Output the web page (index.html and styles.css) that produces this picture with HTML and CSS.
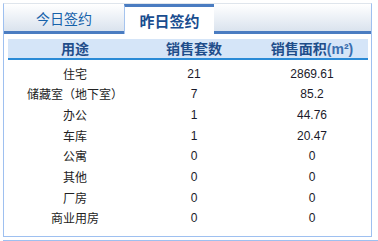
FILE: index.html
```html
<!DOCTYPE html>
<html lang="zh">
<head>
<meta charset="utf-8">
<link rel="stylesheet" href="styles.css">
</head>
<body>
<div class="panel">
  <div class="tabs">
    <div class="tab">今日签约</div>
    <div class="tab active">昨日签约</div>
    <div class="tab-rest"></div>
  </div>
  <div class="content">
    <div class="grid head">
      <div class="c1">用途</div>
      <div class="c2">销售套数</div>
      <div class="c3">销售面积<span class="unit">(m²)</span></div>
    </div>
    <div class="rows">
      <div class="grid row"><div class="c1">住宅</div><div class="c2 num">21</div><div class="c3 num">2869.61</div></div>
      <div class="grid row"><div class="c1">储藏室（地下室）</div><div class="c2 num">7</div><div class="c3 num">85.2</div></div>
      <div class="grid row"><div class="c1">办公</div><div class="c2 num">1</div><div class="c3 num">44.76</div></div>
      <div class="grid row"><div class="c1">车库</div><div class="c2 num">1</div><div class="c3 num">20.47</div></div>
      <div class="grid row"><div class="c1">公寓</div><div class="c2 num">0</div><div class="c3 num">0</div></div>
      <div class="grid row"><div class="c1">其他</div><div class="c2 num">0</div><div class="c3 num">0</div></div>
      <div class="grid row"><div class="c1">厂房</div><div class="c2 num">0</div><div class="c3 num">0</div></div>
      <div class="grid row"><div class="c1">商业用房</div><div class="c2 num">0</div><div class="c3 num">0</div></div>
    </div>
  </div>
</div>
<div class="next"></div>
</body>
</html>
```

FILE: styles.css
```css
html, body {
  margin: 0;
  padding: 0;
  background: #ffffff;
}
body {
  font-family: "Noto Sans CJK SC", "Liberation Sans", sans-serif;
  font-size: 12px;
  color: #222222;
}
.panel {
  box-sizing: border-box;
  margin: 3px 0 0 3px;
  width: 369px;
  height: 234px;
  border: 1px solid #9ec0f0;
  border-top: 1px solid #dfe5ec;
  display: flex;
  flex-direction: column;
}
.tabs {
  display: flex;
  height: 30px;
}
.tab, .tab-rest {
  box-sizing: border-box;
  height: 30px;
  background: linear-gradient(#ffffff, #dae3ee);
  border-bottom: 3px solid #4a7cc1;
}
.tab {
  width: 120px;
  display: flex;
  align-items: center;
  justify-content: center;
  font-size: 14px;
  color: #1662aa;
  line-height: 1;
}
.tab.active {
  width: 90px;
  background: #ffffff;
  border-bottom: none;
  border-top: 3px solid #4a7cc1;
  border-left: 1px solid #a6c4ee;
  font-weight: bold;
  font-size: 15px;
  color: #1a4d8f;
}
.tab-rest {
  flex: 1;
}
.content {
  padding: 5px 3px 0 4px;
}
.grid {
  display: grid;
  grid-template-columns: 134px 104px 1fr;
  text-align: center;
}
.c3 {
  padding-left: 10px;
}
.head {
  height: 19px;
  background: #d5e5f8;
  border-bottom: 2px solid #2a8ad6;
  font-weight: bold;
  font-size: 14px;
  color: #1f4d8a;
  line-height: 19px;
}
.unit {
  font-family: "Liberation Sans", sans-serif;
  color: #3a6eae;
}
.rows {
  padding-top: 3.6px;
}
.row {
  height: 20.7px;
  line-height: 20.7px;
}
.num {
  font-family: "Liberation Sans", Arial, sans-serif;
  color: #1a1a2a;
}
.next {
  margin: 3px 0 0 3px;
  border-top: 1px solid #9ec0f0;
  height: 4px;
}
```
